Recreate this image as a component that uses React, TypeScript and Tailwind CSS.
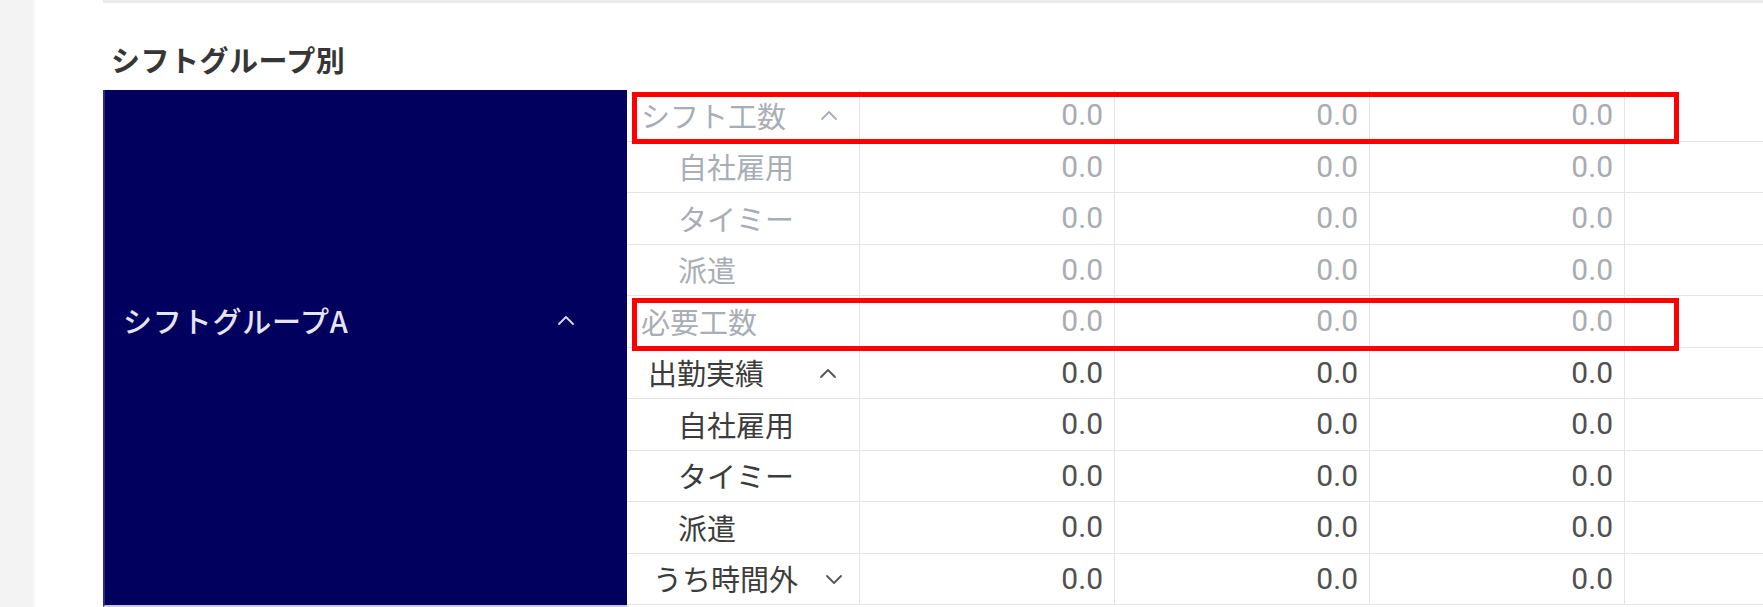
import React from "react";

type Row = {
  label: string;
  kind: "parent" | "child";
  grey: boolean;
  chevron?: "up" | "down";
  pl: string;
  chevPr?: string;
};

const rows: Row[] = [
  { label: "シフト工数", kind: "parent", grey: true, chevron: "up", pl: "pl-[14px]", chevPr: "pr-[21px]" },
  { label: "自社雇用", kind: "child", grey: true, pl: "pl-[51px]" },
  { label: "タイミー", kind: "child", grey: true, pl: "pl-[51px]" },
  { label: "派遣", kind: "child", grey: true, pl: "pl-[51px]" },
  { label: "必要工数", kind: "parent", grey: true, pl: "pl-[14px]" },
  { label: "出勤実績", kind: "parent", grey: false, chevron: "up", pl: "pl-[21px]", chevPr: "pr-[22px]" },
  { label: "自社雇用", kind: "child", grey: false, pl: "pl-[51px]" },
  { label: "タイミー", kind: "child", grey: false, pl: "pl-[51px]" },
  { label: "派遣", kind: "child", grey: false, pl: "pl-[51px]" },
  { label: "うち時間外", kind: "parent", grey: false, chevron: "down", pl: "pl-[26px]", chevPr: "pr-[16px]" },
];

function Chevron({ dir, color }: { dir: "up" | "down"; color: string }) {
  return (
    <svg width="18" height="12" viewBox="0 0 18 12" fill="none" className="shrink-0">
      {dir === "up" ? (
        <polyline points="2,10 9,3 16,10" stroke={color} strokeWidth="1.8" strokeLinecap="round" strokeLinejoin="round" />
      ) : (
        <polyline points="2,3 9,10 16,3" stroke={color} strokeWidth="1.8" strokeLinecap="round" strokeLinejoin="round" />
      )}
    </svg>
  );
}

export default function App() {
  return (
    <div className="flex w-[1763px] h-[607px] bg-white overflow-hidden font-['Noto_Sans_CJK_JP','Noto_Sans',sans-serif]">
      <div className="w-[35px] shrink-0 bg-[#f3f3f3] border-r-[2px] border-[#f8f8f8]" />
      <div className="flex-1 flex flex-col pl-[68px]">
        <div className="h-[4px] shrink-0 border-t-[3px] border-[#ececec]" />
        <div className="h-[86px] shrink-0 pt-[41px] pl-[8px] text-[29px] leading-[29px] font-bold text-[#363636] tracking-[0.5px]">
          シフトグループ別
        </div>
        <div className="flex">
          <div className="w-[524px] h-[517px] shrink-0 bg-[#02005f] pl-[18px] pr-[52px] pt-[214px] flex items-start justify-between border-l-[2px] border-l-[#2a2a90] border-b-[2px] border-b-[#c9c9e0]">
            <span className="text-[29px] leading-[32px] font-medium text-[#e4e4f2] tracking-[0.8px]">シフトグループA</span>
            <span className="pt-[10px]">
              <Chevron dir="up" color="#d8d8ea" />
            </span>
          </div>
          <div className="relative flex-1">
            <div className="grid grid-cols-[233px_255px_255px_255px_1fr]">
              {rows.map((r, i) => {
                const labelColor = r.grey ? "text-[#a9adb4]" : "text-[#3c3c3c]";
                const valColor = r.grey ? "text-[#a9acb1]" : "text-[#505050]";
                const chevColor = r.grey ? "#a9adb4" : "#555";
                return (
                  <React.Fragment key={i}>
                    <div className={`h-[51.5px] flex items-center border-b border-r border-[#e5e5e7] ${r.pl} ${r.chevPr ?? ""}`}>
                      <span className={`text-[29px] leading-none ${labelColor}`}>{r.label}</span>
                      {r.chevron && (
                        <span className="ml-auto">
                          <Chevron dir={r.chevron} color={chevColor} />
                        </span>
                      )}
                    </div>
                    {[0, 1, 2].map((c) => (
                      <div
                        key={c}
                        className={`h-[51.5px] flex items-center justify-end pr-[11px] border-b border-r border-[#e5e5e7] font-['Roboto',sans-serif] text-[30px] leading-none ${valColor}`}
                      >
                        0.0
                      </div>
                    ))}
                    <div className="h-[51.5px] border-b border-[#e5e5e7]" />
                  </React.Fragment>
                );
              })}
            </div>
            <div className="absolute left-[5px] top-[2px] w-[1047px] h-[52px] border-[5px] border-[#ff0000] pointer-events-none" />
            <div className="absolute left-[5px] top-[208px] w-[1047px] h-[53px] border-[5px] border-[#ff0000] pointer-events-none" />
          </div>
        </div>
      </div>
    </div>
  );
}
